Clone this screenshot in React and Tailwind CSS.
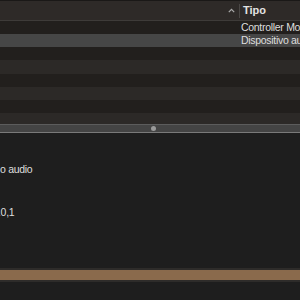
export default function App() {
  const rows = [
    { bg: "bg-[#221f1d]", text: "Controller Monitor", h: "h-[13px]" },
    { bg: "bg-[#464646]", text: "Dispositivo audio", h: "h-[13px]" },
    { bg: "bg-[#221f1d]", text: "", h: "h-[13px]" },
    { bg: "bg-[#2c2927]", text: "", h: "h-[14px]" },
    { bg: "bg-[#221f1d]", text: "", h: "h-[13px]" },
    { bg: "bg-[#2c2927]", text: "", h: "h-[13px]" },
    { bg: "bg-[#221f1d]", text: "", h: "h-[13px]" },
    { bg: "bg-[#2c2927]", text: "", h: "h-[11px]" },
  ];
  return (
    <div
      className="w-[300px] h-[300px] overflow-hidden flex flex-col bg-[#1e1e1e] text-[#dedede] text-[10.5px] leading-none tracking-[-0.3px]"
      style={{ fontFamily: '"Liberation Sans", "Noto Sans", sans-serif' }}
    >
      <div className="h-[1px] bg-[#1a1817]" />
      <div className="h-[19px] bg-[#2e2a28] flex items-center">
        <div className="flex-1" />
        <svg width="7" height="5" viewBox="0 0 7 5" className="mr-[4px]">
          <path d="M0.8 4.2 L3.5 1.3 L6.2 4.2" fill="none" stroke="#a8a8a8" strokeWidth="1.2" />
        </svg>
        <div className="w-[1px] h-[14px] bg-[#4a4745]" />
        <div className="w-[60px] pl-[3px] font-bold text-[11px] tracking-normal text-[#e2e2e2] whitespace-nowrap">Tipo</div>
      </div>
      <div className="h-[1px] bg-[#3e3b39]" />
      {rows.map((r, i) => (
        <div key={i} className={`${r.h} ${r.bg} flex items-center`}>
          <div className="flex-1" />
          <div className="w-[59px] whitespace-nowrap">{r.text}</div>
        </div>
      ))}
      <div className="h-[1px] bg-[#5c5c5c]" />
      <div className="h-[7px] bg-[#444444] flex items-center justify-center">
        <div className="w-[5px] h-[5px] rounded-full bg-[#9a9a9a] ml-[6px]" />
      </div>
      <div className="h-[1px] bg-[#7a7a7a]" />
      <div className="h-[135px] bg-[#1e1e1e] flex flex-col">
        <div className="h-[31px]" />
        <div className="h-[11px] flex items-center whitespace-nowrap">o audio</div>
        <div className="h-[32px]" />
        <div className="h-[11px] flex items-center whitespace-nowrap -ml-[2px]">.0,1</div>
      </div>
      <div className="h-[2px] bg-[#2e2c2a]" />
      <div className="h-[10px] bg-[#8a6a4c]" />
      <div className="h-[2px] bg-[#2e2c2a]" />
      <div className="flex-1 bg-[#1e1e1e]" />
    </div>
  );
}
